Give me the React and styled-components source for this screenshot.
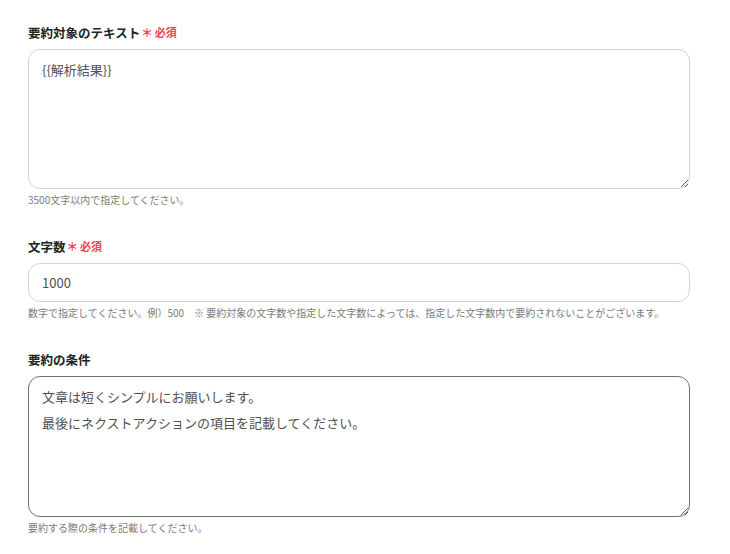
import styled, { createGlobalStyle } from "styled-components";

const GlobalStyle = createGlobalStyle`
  html, body {
    margin: 0;
    padding: 0;
    background: #fff;
  }
  body {
    font-family: "Noto Sans CJK JP", "Noto Sans", sans-serif;
    color: #333;
  }
`;

const Form = styled.form`
  width: 662px;
  padding: 22px 0 0 28px;
  display: flex;
  flex-direction: column;
  gap: 28px;
`;

const Field = styled.div`
  display: flex;
  flex-direction: column;
`;

const Label = styled.label`
  display: flex;
  align-items: center;
  height: 20px;
  margin-bottom: 7px;
  font-size: 12.5px;
  font-weight: 700;
  color: #222;
`;

const Required = styled.span`
  margin-left: 1px;
  color: #f0444f;
  font-size: 11px;
  font-weight: 700;
  display: flex;
  align-items: center;
  gap: 2px;

  &::before {
    content: "＊";
    font-size: 11.5px;
  }
`;

const TextArea = styled.textarea`
  box-sizing: border-box;
  width: 100%;
  height: ${(p) => p.$height}px;
  padding: 7px 13px;
  font-family: inherit;
  font-size: 13px;
  line-height: 26px;
  color: #505050;
  border: 1px solid ${(p) => (p.$active ? "#6f6f6f" : "#d2d2d6")};
  border-radius: 12px;
  resize: vertical;
  outline: none;
  background: #fff;
`;

const Input = styled.input`
  box-sizing: border-box;
  width: 100%;
  height: 39px;
  padding: 0 13px;
  font-family: inherit;
  font-size: 13px;
  color: #505050;
  border: 1px solid #d2d2d6;
  border-radius: 12px;
  outline: none;
  background: #fff;
`;

const Help = styled.p`
  margin: 3px 0 0;
  font-size: 10px;
  line-height: 16px;
  color: #7a7a7a;
  white-space: pre;
`;

export default function App() {
  return (
    <>
      <GlobalStyle />
      <Form onSubmit={(e) => e.preventDefault()}>
        <Field>
          <Label>
            要約対象のテキスト<Required>必須</Required>
          </Label>
          <TextArea $height={140} defaultValue="{{解析結果}}" />
          <Help>3500文字以内で指定してください。</Help>
        </Field>
        <Field>
          <Label>
            文字数<Required>必須</Required>
          </Label>
          <Input defaultValue="1000" />
          <Help>
            数字で指定してください。例）500　※ 要約対象の文字数や指定した文字数によっては、指定した文字数内で要約されないことがございます。
          </Help>
        </Field>
        <Field>
          <Label>要約の条件</Label>
          <TextArea
            $height={141}
            $active
            defaultValue={"文章は短くシンプルにお願いします。\n最後にネクストアクションの項目を記載してください。"}
          />
          <Help>要約する際の条件を記載してください。</Help>
        </Field>
      </Form>
    </>
  );
}
